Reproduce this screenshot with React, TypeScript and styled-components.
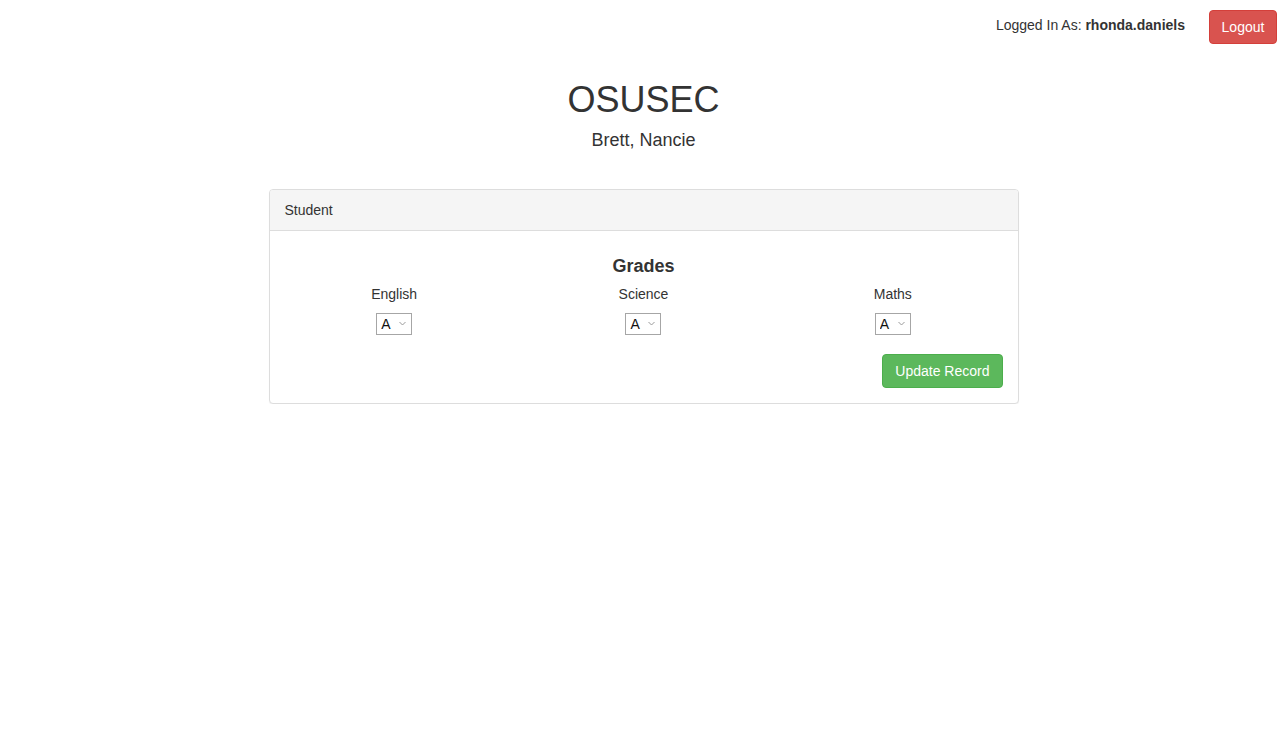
import React from "react";
import styled, { createGlobalStyle } from "styled-components";

const Global = createGlobalStyle`
  html, body { margin: 0; padding: 0; background: #fff; }
  body {
    font-family: "Liberation Sans", Arial, sans-serif;
    font-size: 14px;
    line-height: 1.42857;
    color: #333;
  }
  * { box-sizing: border-box; }
`;

const TopBar = styled.div`
  display: flex;
  justify-content: flex-end;
  align-items: flex-start;
  padding: 0 10px 0 0;
  height: 44px;
`;

const LoggedIn = styled.div`
  margin-top: 15px;
  margin-right: 24px;
  line-height: 20px;
`;

const Btn = styled.button<{ $variant: "danger" | "success" }>`
  font-family: "Liberation Sans", Arial, sans-serif;
  font-size: 14px;
  line-height: 20px;
  height: 34px;
  padding: 6px 12px;
  border-radius: 4px;
  color: #fff;
  cursor: pointer;
  background: ${(p) => (p.$variant === "danger" ? "#d9534f" : "#5cb85c")};
  border: 1px solid ${(p) => (p.$variant === "danger" ? "#d43f3a" : "#4cae4c")};
`;

const LogoutBtn = styled(Btn)`
  margin-top: 10px;
  width: 68px;
  padding-left: 0;
  padding-right: 0;
`;

const Header = styled.header`
  text-align: center;
  padding-top: 36px;
`;

const Title = styled.h1`
  font-size: 36px;
  font-weight: 500;
  line-height: 1.1;
  margin: 0;
`;

const Subtitle = styled.h4`
  font-size: 18px;
  font-weight: 500;
  line-height: 1.1;
  margin: 11px 0 0;
`;

const Panel = styled.div`
  width: 750px;
  margin: 39px auto 0;
  border: 1px solid #ddd;
  border-radius: 4px;
  box-shadow: 0 1px 1px rgba(0, 0, 0, 0.05);
  background: #fff;
`;

const PanelHeading = styled.div`
  background: #f5f5f5;
  border-bottom: 1px solid #ddd;
  padding: 10px 15px;
  line-height: 20px;
  border-radius: 3px 3px 0 0;
`;

const PanelBody = styled.div`
  padding: 15px;
`;

const Grades = styled.h4`
  font-size: 18px;
  font-weight: 700;
  line-height: 1.1;
  text-align: center;
  margin: 11px 0 7px;
`;

const Row = styled.div`
  display: grid;
  grid-template-columns: repeat(3, 1fr);
  margin: 0 -15px;
`;

const Col = styled.div`
  padding: 0 15px;
  display: flex;
  flex-direction: column;
  align-items: center;
`;

const Label = styled.div`
  line-height: 20px;
  margin-bottom: 9px;
`;

const SelectWrap = styled.div`
  position: relative;
  width: 36px;
  height: 22px;
`;

const Select = styled.select`
  appearance: none;
  -webkit-appearance: none;
  font-family: "Liberation Sans", Arial, sans-serif;
  font-size: 14px;
  width: 36px;
  height: 22px;
  padding: 0 0 0 4px;
  margin: 0;
  line-height: 20px;
  border: 1px solid #a6a6a6;
  border-radius: 0;
  background: #fff;
  color: #111;
`;

const Chevron = styled.svg`
  position: absolute;
  right: 6px;
  top: 8px;
  width: 7px;
  height: 5px;
  pointer-events: none;
`;

const Actions = styled.div`
  display: flex;
  justify-content: flex-end;
  margin-top: 19px;
`;

const subjects = ["English", "Science", "Maths"];

export default function App() {
  return (
    <>
      <Global />
      <TopBar>
        <LoggedIn>
          Logged In As: <b>rhonda.daniels</b>
        </LoggedIn>
        <LogoutBtn $variant="danger">Logout</LogoutBtn>
      </TopBar>
      <Header>
        <Title>OSUSEC</Title>
        <Subtitle>Brett, Nancie</Subtitle>
      </Header>
      <Panel>
        <PanelHeading>Student</PanelHeading>
        <PanelBody>
          <Grades>Grades</Grades>
          <Row>
            {subjects.map((s) => (
              <Col key={s}>
                <Label>{s}</Label>
                <SelectWrap>
                  <Select defaultValue="A">
                    <option>A</option>
                    <option>B</option>
                    <option>C</option>
                    <option>D</option>
                    <option>F</option>
                  </Select>
                  <Chevron viewBox="0 0 7 5">
                    <path d="M0.5 1 L3.5 4 L6.5 1" fill="none" stroke="#9a9a9a" strokeWidth="1" />
                  </Chevron>
                </SelectWrap>
              </Col>
            ))}
          </Row>
          <Actions>
            <Btn $variant="success">Update Record</Btn>
          </Actions>
        </PanelBody>
      </Panel>
    </>
  );
}
